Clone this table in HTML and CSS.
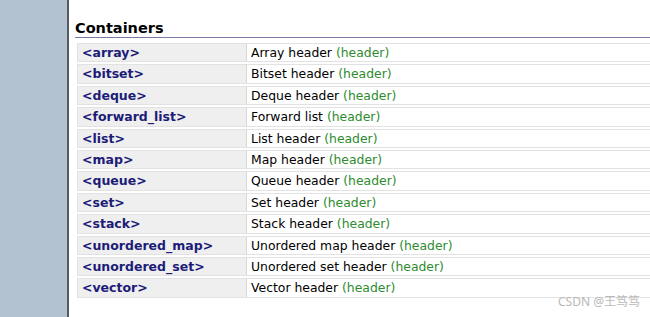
FILE: index.html
```html
<!DOCTYPE html>
<html>
<head>
<meta charset="utf-8">
<link rel="stylesheet" href="styles.css">
</head>
<body>
<div class="page">
  <aside class="sidebar"></aside>
  <main class="content">
    <h3 class="title">Containers</h3>
    <table class="links">
      <tr><td class="k"><a>&lt;array&gt;</a></td><td class="v">Array header <span class="tag">(header)</span></td></tr>
      <tr><td class="k"><a>&lt;bitset&gt;</a></td><td class="v">Bitset header <span class="tag">(header)</span></td></tr>
      <tr><td class="k"><a>&lt;deque&gt;</a></td><td class="v">Deque header <span class="tag">(header)</span></td></tr>
      <tr><td class="k"><a>&lt;forward_list&gt;</a></td><td class="v">Forward list <span class="tag">(header)</span></td></tr>
      <tr><td class="k"><a>&lt;list&gt;</a></td><td class="v">List header <span class="tag">(header)</span></td></tr>
      <tr><td class="k"><a>&lt;map&gt;</a></td><td class="v">Map header <span class="tag">(header)</span></td></tr>
      <tr><td class="k"><a>&lt;queue&gt;</a></td><td class="v">Queue header <span class="tag">(header)</span></td></tr>
      <tr><td class="k"><a>&lt;set&gt;</a></td><td class="v">Set header <span class="tag">(header)</span></td></tr>
      <tr><td class="k"><a>&lt;stack&gt;</a></td><td class="v">Stack header <span class="tag">(header)</span></td></tr>
      <tr><td class="k"><a>&lt;unordered_map&gt;</a></td><td class="v">Unordered map header <span class="tag">(header)</span></td></tr>
      <tr><td class="k"><a>&lt;unordered_set&gt;</a></td><td class="v">Unordered set header <span class="tag">(header)</span></td></tr>
      <tr><td class="k"><a>&lt;vector&gt;</a></td><td class="v">Vector header <span class="tag">(header)</span></td></tr>
    </table>
    <div class="mark">CSDN @王笃笃</div>
  </main>
</div>
</body>
</html>
```
FILE: styles.css
```css
html, body {
  margin: 0;
  padding: 0;
  background: #fff;
}
body {
  font-family: "DejaVu Sans", Verdana, sans-serif;
  color: #000;
  overflow: hidden;
}
.page {
  display: flex;
  height: 317px;
}
.sidebar {
  width: 67px;
  flex: none;
  background: #b3c2d1;
  border-right: 2px solid #555a60;
}
.content {
  flex: 1;
  padding-left: 6px;
  position: relative;
  min-width: 0;
}
.title {
  margin: 20px 0 0 0;
  font-size: 14.5px;
  font-weight: bold;
  line-height: 17px;
  padding-bottom: 0;
  border-bottom: 1px solid #7a78a6;
}
.links {
  margin: 3px 0 0 2px;
  border-collapse: separate;
  border-spacing: 0 2px;
  width: 600px;
  font-size: 12.4px;
}
.links td {
  padding: 0 4px;
  border-top: 1px solid #e2e2e2;
  border-bottom: 1px solid #e2e2e2;
  height: 17.4px;
  line-height: 17.4px;
  white-space: nowrap;
}
.k {
  width: 160px;
  background: #efefef;
  border-left: 1px solid #e2e2e2;
}
.k a {
  color: #1c1c78;
  font-weight: bold;
  font-size: 12.5px;
}
.v {
  background: #fff;
  border-left: 1px solid #d8d8d8;
}
.tag {
  color: #2e8b2e;
}
.mark {
  position: absolute;
  right: 10px;
  bottom: 7px;
  font-family: "Noto Sans", "Noto Sans CJK SC", sans-serif;
  font-size: 12px;
  color: #b8b8b8;
}
```
